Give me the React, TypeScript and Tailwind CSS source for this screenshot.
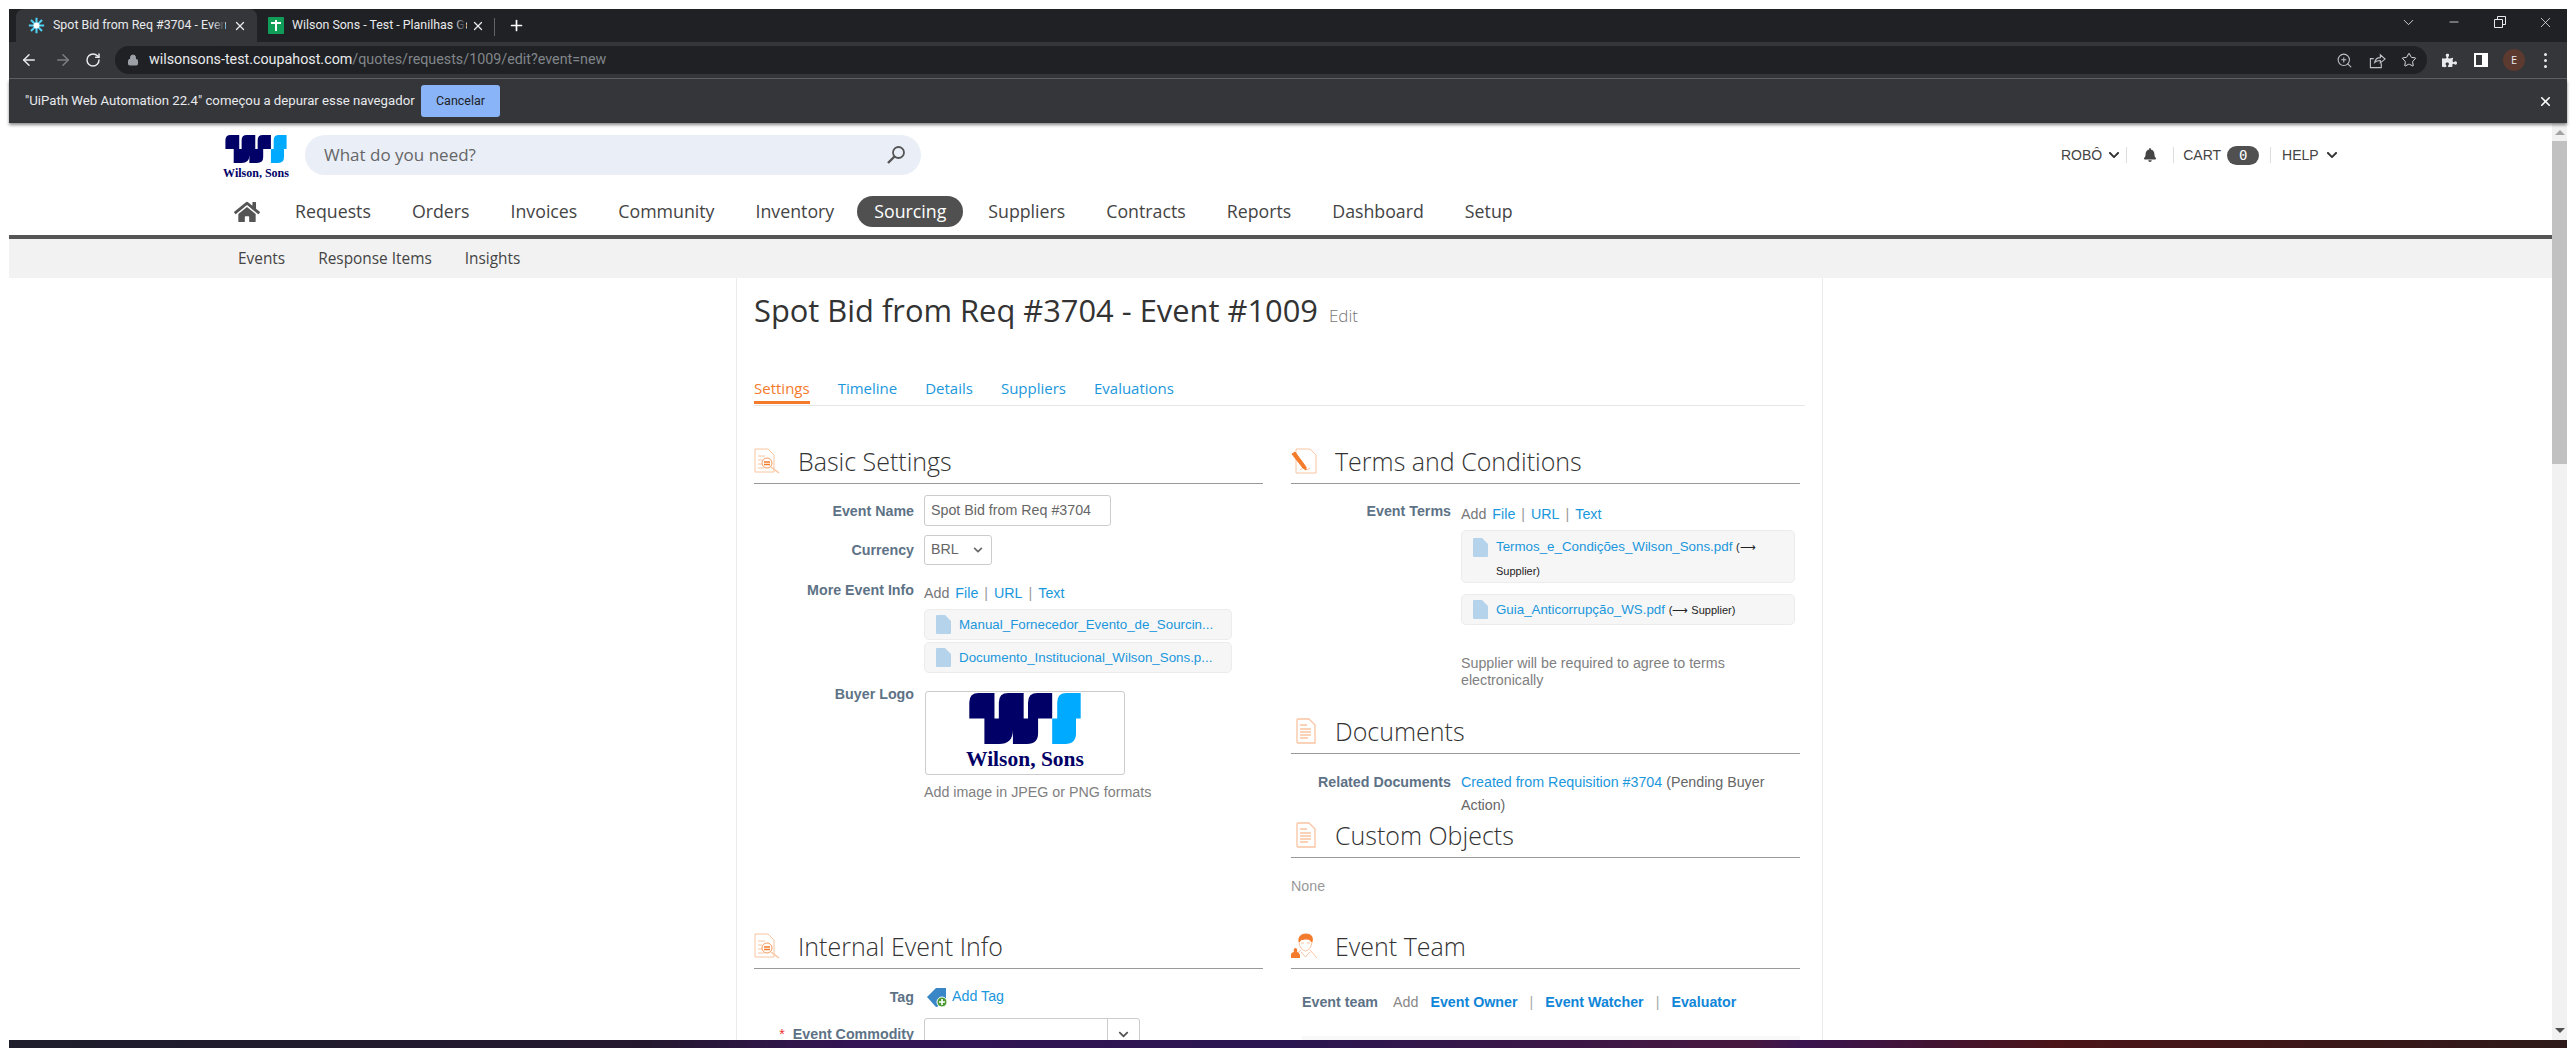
import React from "react";
import { ArrowLeft, ArrowRight, RotateCw, Lock, ZoomIn, Star, X, Plus, ChevronDown, Minus } from "lucide-react";
import { FaHome, FaBell, FaPuzzlePiece, FaChevronDown } from "react-icons/fa";

const Sep = () => <span className="text-[#9a9a9a] mx-[6px]">|</span>;

function Logo({ className }: { className: string }) {
  return (
    <svg viewBox="0 0 332 152" className={className}>
      <path fill="#000066" d="M0 28Q0 0 28 0H75V76H88V28Q88 0 116 0H162V76H175V28Q175 0 203 0H247V76H205V120Q205 152 172 152H130V110Q130 152 88 152H45V76H0Z" />
      <path fill="#00aaff" d="M247 76H262V28Q262 0 290 0H332V76H318V120Q318 152 286 152H247Z" />
    </svg>
  );
}

function FileIcon() {
  return (
    <svg viewBox="0 0 15 19" className="w-[15px] h-[19px] shrink-0">
      <path fill="#b5d3ea" d="M0 1Q0 0 1 0H9L15 6V18Q15 19 14 19H1Q0 19 0 18Z" />
    </svg>
  );
}

function IconDocSearch() {
  return (
    <svg viewBox="0 0 26 26" className="w-[26px] h-[26px]" fill="none" stroke="#f9c4a0" strokeWidth="1">
      <path d="M1 1H14L20 7V24H1Z" fill="#fff" />
      <path d="M4 8H11M4 12H8M4 16H8M4 20H10" />
      <circle cx="13" cy="15" r="5" fill="#fff" stroke="#f59a5f" />
      <path d="M10 14H16M10 16.5H16" stroke="#f47b2b" strokeWidth="1.6" />
      <path d="M17 19L25 25" stroke="#f9c4a0" strokeWidth="1.5" />
    </svg>
  );
}
function IconPen() {
  return (
    <svg viewBox="0 0 26 26" className="w-[26px] h-[26px]" fill="none" stroke="#f9c4a0" strokeWidth="1">
      <path d="M5 1H19L25 7V25H5Z" />
      <path d="M9 22L13 19L16 22L19 20" />
      <path d="M1 6L4 4L15 19L15 22L12 20Z" fill="#f47b2b" stroke="#f47b2b" />
    </svg>
  );
}
function IconDoc() {
  return (
    <svg viewBox="0 0 20 26" className="w-[20px] h-[26px] ml-[5px]" fill="none" stroke="#f9c4a0" strokeWidth="1.3">
      <path d="M1 2Q1 1 2 1H13L19 7V25H2Q1 25 1 24Z" fill="#fff" />
      <path d="M4 7H11M4 11H15M4 14H15M4 17H15M4 20H12" />
    </svg>
  );
}
function IconPerson() {
  return (
    <svg viewBox="0 0 26 26" className="w-[26px] h-[26px]" fill="none" stroke="#f9c4a0" strokeWidth="1">
      <path d="M8 9Q7 1 15 1Q23 1 21 9Q18 5 14 6Q10 6 8 9Z" fill="#f47b2b" stroke="#f47b2b" />
      <path d="M8 9Q9 17 14.500 18Q20 17 21 9" />
      <path d="M10 10H13M16 10H19" />
      <path d="M10 17L5 21M19 17L26 25M14.500 24L10 19M14.500 24L19 19" />
      <path d="M0 25V21Q1 19 3 19Q2 16 4 15Q7 15 6 19Q8 19 9 22V25Z" fill="#f47b2b" stroke="none" />
    </svg>
  );
}

function Section({ icon, title, children }: { icon: React.ReactNode; title: string; children?: React.ReactNode }) {
  return (
    <div>
      <div className="h-[35px] flex items-center border-b border-[#999] pb-[10px]">
        <span className="w-[44px] shrink-0 flex">{icon}</span>
        <h2 className="font-['Open_Sans',sans-serif] font-light text-[25px] leading-[24px] text-[#333]">{title}</h2>
      </div>
      {children}
    </div>
  );
}

function Label({ children, className = "" }: { children: React.ReactNode; className?: string }) {
  return <div className={`w-[160px] shrink-0 text-right font-bold text-[14.25px] leading-[16px] text-[#5d7286] ${className}`}>{children}</div>;
}

function AddLinks() {
  return (
    <div className="h-[16px] leading-[16px] text-[14.25px] text-[#777]">
      Add<span className="text-[#1b97dc] ml-[6px]">File</span><Sep /><span className="text-[#1b97dc]">URL</span><Sep /><span className="text-[#1b97dc]">Text</span>
    </div>
  );
}

function Chip({ name }: { name: string }) {
  return (
    <div className="h-[31px] flex items-center gap-[8px] pl-[11px] bg-[#f6f6f6] border border-[#ececec] rounded-[5px] text-[13.33px] text-[#1b97dc]">
      <FileIcon />
      <span>{name}</span>
    </div>
  );
}

const NAV = ["Requests", "Orders", "Invoices", "Community", "Inventory", "Sourcing", "Suppliers", "Contracts", "Reports", "Dashboard", "Setup"];

export default function App() {
  return (
    <div className="w-[2576px] h-[1048px] overflow-hidden bg-white flex flex-col pt-[9px] font-['Liberation_Sans',sans-serif]">
      <div className="flex-1 min-h-0 flex flex-col mx-[9px]">
        {/* Tab strip */}
        <div className="h-[33px] bg-[#202124] flex items-end pl-[7px] font-['Roboto',sans-serif] text-[12.4px] text-[#e8eaed] shrink-0">
          <div className="relative w-[241px] h-[33px] bg-[#35363a] rounded-t-[8px] flex items-center pl-[12px] overflow-hidden">
            <svg viewBox="0 0 20 20" className="w-[17px] h-[17px] shrink-0" stroke="#4fd2f5" strokeWidth="2.4">
              <path d="M10 1V19M1 10H19M3.500 3.500L16.500 16.500M16.500 3.500L3.500 16.500" />
              <circle cx="10" cy="10" r="3.500" fill="#fff" stroke="none" />
            </svg>
            <span className="ml-[8px] whitespace-nowrap w-[173px] overflow-hidden">Spot Bid from Req #3704 - Event #1009</span>
            <span className="absolute right-[32px] top-0 h-full w-[12px] bg-gradient-to-r from-transparent to-[#35363a]" />
            <X size={14} strokeWidth={2.2} className="absolute right-[10px] top-[10px]" />
          </div>
          <div className="relative w-[238px] h-[33px] flex items-center pl-[11px] overflow-hidden">
            <span className="w-[16px] h-[17px] bg-[#0f9d58] rounded-[1px] shrink-0 flex items-center justify-center relative">
              <span className="w-[2px] h-[11px] bg-white" />
              <span className="absolute top-[5px] left-[3px] w-[10px] h-[2px] bg-white" />
            </span>
            <span className="ml-[8px] whitespace-nowrap w-[175px] overflow-hidden">Wilson Sons - Test - Planilhas Google</span>
            <span className="absolute right-[29px] top-0 h-full w-[12px] bg-gradient-to-r from-transparent to-[#202124]" />
            <X size={14} strokeWidth={2.2} className="absolute right-[10px] top-[10px]" />
            <span className="absolute right-0 top-[9px] h-[18px] w-px bg-[#5f6368]" />
          </div>
          <Plus size={17} strokeWidth={2.4} className="ml-[13px] mb-[8px] text-white" />
          <div className="ml-auto self-start flex items-center text-[#e8eaed] h-[26px]">
            <ChevronDown size={17} strokeWidth={1.2} className="mr-[30px]" />
            <Minus size={14} strokeWidth={1.4} className="mr-[33px]" />
            <svg viewBox="0 0 12 12" className="w-[12px] h-[12px] mr-[31px]" fill="none" stroke="#e8eaed"><path d="M.5 3.500H8.500V11.500H.5ZM3.500 3.500V.5H11.500V8.500H8.500" /></svg>
            <X size={17} strokeWidth={1.1} className="mr-[13px]" />
          </div>
        </div>
        {/* Toolbar */}
        <div className="h-[36px] bg-[#35363a] border-b border-[#5f6368] flex items-center shrink-0 text-[#dadce0] box-content">
          <ArrowLeft size={18} strokeWidth={2} className="ml-[11px] text-[#e8eaed]" />
          <ArrowRight size={18} strokeWidth={2} className="ml-[16px] text-[#7d7f83]" />
          <RotateCw size={16} strokeWidth={2.2} className="ml-[13px] text-[#e8eaed]" />
          <div className="ml-[14px] w-[2312px] h-[28px] bg-[#202124] rounded-full flex items-center pl-[12px] pr-[10px] font-['Roboto',sans-serif] text-[14.3px]">
            <Lock size={12} className="text-[#9aa0a6]" fill="#9aa0a6" />
            <span className="ml-[10px] text-[#e8eaed]">wilsonsons-test.coupahost.com</span>
            <span className="text-[#80868b]">/quotes/requests/1009/edit?event=new</span>
            <div className="ml-auto flex items-center">
              <ZoomIn size={17} strokeWidth={1.5} className="text-[#bdc1c6] mr-[16px]" />
              <svg viewBox="0 0 18 18" className="w-[17px] h-[17px] mr-[15px]" fill="none" stroke="#bdc1c6" strokeWidth="1.2">
                <path d="M5 7H1.500V16.500H13V12M6 11Q7 6 12 6V3L17 7.500L12 11.500V9Q8 9 6 11Z" />
              </svg>
              <Star size={16} strokeWidth={1.5} className="text-[#dadce0]" />
            </div>
          </div>
          <FaPuzzlePiece size={15} className="ml-[15px] text-[#e8eaed]" />
          <span className="ml-[17px] w-[14px] h-[14px] border-[2px] border-white flex justify-end"><span className="w-[4px] h-full bg-white" /></span>
          <span className="ml-[15px] w-[22px] h-[22px] rounded-full bg-[#5d3a30] text-[#e8eaed] text-[11px] flex items-center justify-center font-['Open_Sans',sans-serif]">E</span>
          <span className="ml-[19px] flex flex-col gap-[3px]">
            <span className="w-[3px] h-[3px] rounded-full bg-[#e8eaed]" />
            <span className="w-[3px] h-[3px] rounded-full bg-[#e8eaed]" />
            <span className="w-[3px] h-[3px] rounded-full bg-[#e8eaed]" />
          </span>
        </div>
        {/* Info bar */}
        <div className="h-[44px] bg-[#35363a] flex items-center pl-[16px] pr-[14px] font-['Roboto',sans-serif] text-[13.2px] text-[#e8eaed] shrink-0 shadow-[0_2px_3px_rgba(0,0,0,0.45)] relative z-10">
          <span>"UiPath Web Automation 22.4" começou a depurar esse navegador</span>
          <span className="absolute left-[412px] top-[6px] w-[79px] h-[32px] bg-[#8ab4f8] rounded-[3px] text-[#202124] text-[12.5px] flex items-center justify-center">Cancelar</span>
          <X size={15} strokeWidth={2.6} className="ml-auto text-white" />
        </div>

        {/* Page */}
        <div className="flex-1 min-h-0 flex">
          <div className="flex-1 min-w-0 flex flex-col overflow-hidden">
            <div className="h-[116px] shrink-0 border-b-[4px] border-[#555] pl-[215px] flex flex-col">
              <div className="h-[72px] flex shrink-0 pt-[12px]">
                <div className="w-[64px] flex flex-col items-center">
                  <Logo className="w-[64px] h-[28px]" />
                  <span className="mt-[3px] font-['Liberation_Serif',serif] font-bold text-[12px] leading-[14px] text-[#000066] whitespace-nowrap">Wilson, Sons</span>
                </div>
                <div className="ml-[17px] w-[616px] h-[40px] bg-[#e9eef7] rounded-full flex items-center pl-[19px] pr-[15px] font-['Open_Sans',sans-serif] text-[17px] text-[#666]">
                  <span>What do you need?</span>
                  <svg viewBox="0 0 20 20" className="ml-auto w-[20px] h-[20px]" fill="none" stroke="#555">
                    <circle cx="12.500" cy="7.500" r="5.500" strokeWidth="1.8" />
                    <path d="M8.500 11.500L2 18" strokeWidth="2.4" />
                  </svg>
                </div>
                <div className="ml-[1140px] h-[24px] mt-[8px] flex items-center font-['Liberation_Sans',sans-serif] text-[14px] text-[#444]">
                  <span>ROBÔ</span>
                  <FaChevronDown size={12} className="ml-[6px] text-[#333]" />
                  <span className="ml-[6px] w-px h-[16px] bg-[#ddd]" />
                  <FaBell size={14} className="ml-[16px] text-[#444]" />
                  <span className="ml-[16px] w-px h-[16px] bg-[#ddd]" />
                  <span className="ml-[9px]">CART</span>
                  <span className="ml-[6px] w-[32px] h-[19px] rounded-full bg-[#505050] text-white font-['DejaVu_Sans_Mono',monospace] text-[14px] flex items-center justify-center">0</span>
                  <span className="ml-[11px] w-px h-[16px] bg-[#ddd]" />
                  <span className="ml-[11px]">HELP</span>
                  <FaChevronDown size={12} className="ml-[7px] text-[#333]" />
                </div>
              </div>
              <div className="h-[31px] flex items-center font-['Open_Sans',sans-serif] text-[17.75px] text-[#444] mt-[1px]">
                <FaHome size={26} className="ml-[10px] mr-[35px] text-[#555]" />
                {NAV.map((n) =>
                  n === "Sourcing" ? (
                    <span key={n} className="h-[31px] px-[17px] mr-[25px] bg-[#505050] text-white rounded-full flex items-center">{n}</span>
                  ) : (
                    <span key={n} className={n === "Inventory" ? "mr-[23px]" : "mr-[41px]"}>{n}</span>
                  )
                )}
              </div>
            </div>
            <div className="h-[39px] shrink-0 bg-[#f2f2f2] pl-[229px] flex items-center gap-[33px] font-['Open_Sans',sans-serif] text-[15.4px] text-[#444]">
              <span>Events</span><span>Response Items</span><span>Insights</span>
            </div>

            {/* Card */}
            <div className="flex-1 min-h-0 ml-[727px] w-[1087px] border-x border-[#ebebeb] pt-[12px] pl-[17px] overflow-hidden">
              <div className="h-[40px] flex items-baseline font-['Open_Sans',sans-serif] text-[#333]">
                <h1 className="text-[30.85px] leading-[40px]">Spot Bid from Req #3704 - Event #1009</h1>
                <span className="ml-[11px] text-[17px] text-[#777] font-light">Edit</span>
              </div>
              <div className="mt-[48px] w-[1051px] h-[28px] border-b border-[#e6e6e6] flex gap-[28px] font-['Open_Sans',sans-serif] text-[15px] leading-[20px] text-[#1b97dc]">
                <span className="h-[26px] border-b-[3px] border-[#f47b2b] text-[#f47b2b]">Settings</span>
                <span>Timeline</span><span>Details</span><span>Suppliers</span><span>Evaluations</span>
              </div>
              <div className="mt-[43px] grid grid-cols-[509px_509px] grid-rows-[485px_auto] gap-x-[28px]">
                {/* Left top */}
                <Section icon={<IconDocSearch />} title="Basic Settings">
                  <div className="mt-[11px] flex items-center gap-[10px]">
                    <Label>Event Name</Label>
                    <div className="w-[187px] h-[31px] border border-[#ccc] rounded-[3px] pl-[6px] flex items-center text-[14.25px] text-[#666]">Spot Bid from Req #3704</div>
                  </div>
                  <div className="mt-[9px] flex items-center gap-[10px]">
                    <Label>Currency</Label>
                    <div className="w-[68px] h-[30px] border border-[#ccc] rounded-[3px] pl-[6px] pr-[8px] flex items-center justify-between text-[14.25px] text-[#666]">BRL<FaChevronDown size={10} className="text-[#666]" /></div>
                  </div>
                  <div className="mt-[20px] flex gap-[10px]">
                    <Label className="-mt-[3px]">More Event Info</Label>
                    <div className="w-[308px]">
                      <AddLinks />
                      <div className="mt-[8px] flex flex-col gap-[2px]">
                        <Chip name="Manual_Fornecedor_Evento_de_Sourcin..." />
                        <Chip name="Documento_Institucional_Wilson_Sons.p..." />
                      </div>
                    </div>
                  </div>
                  <div className="mt-[18px] flex gap-[10px]">
                    <Label className="-mt-[5px]">Buyer Logo</Label>
                    <div>
                      <div className="ml-[1px] w-[200px] h-[84px] border border-[#ccc] rounded-[3px] flex flex-col items-center pt-[1px]">
                        <Logo className="w-[118px] h-[51px]" />
                        <span className="mt-[3px] font-['Liberation_Serif',serif] font-bold text-[21.500px] leading-[24px] text-[#000066] whitespace-nowrap">Wilson, Sons</span>
                      </div>
                      <div className="mt-[9px] text-[14.25px] leading-[16px] text-[#808080]">Add image in JPEG or PNG formats</div>
                    </div>
                  </div>
                </Section>
                {/* Right top */}
                <div>
                  <Section icon={<IconPen />} title="Terms and Conditions">
                    <div className="mt-[22px] flex gap-[10px]">
                      <Label className="-mt-[3px]">Event Terms</Label>
                      <div className="w-[334px]">
                        <AddLinks />
                        <div className="mt-[8px] h-[53px] bg-[#f6f6f6] border border-[#ececec] rounded-[5px] flex gap-[8px] pl-[11px] pt-[7px] text-[13.33px] leading-[23px] text-[#1b97dc]">
                          <FileIcon />
                          <div className="-mt-[3px]">Termos_e_Condições_Wilson_Sons.pdf <span className="text-[11px] text-[#222]">(⟶<br />Supplier)</span></div>
                        </div>
                        <div className="mt-[11px] h-[31px] bg-[#f6f6f6] border border-[#ececec] rounded-[5px] flex items-center gap-[8px] pl-[11px] text-[13.33px] text-[#1b97dc]">
                          <FileIcon />
                          <div>Guia_Anticorrupção_WS.pdf <span className="text-[11px] text-[#222]">(⟶ Supplier)</span></div>
                        </div>
                        <div className="mt-[30px] text-[14.25px] leading-[17px] text-[#808080]">Supplier will be required to agree to terms<br />electronically</div>
                      </div>
                    </div>
                  </Section>
                  <div className="mt-[30px]">
                    <Section icon={<IconDoc />} title="Documents">
                      <div className="mt-[17px] flex gap-[10px] text-[14.25px] leading-[23px]">
                        <Label className="mt-[3px]">Related Documents</Label>
                        <div className="w-[334px] text-[#666]"><span className="text-[#1b97dc]">Created from Requisition #3704</span> (Pending Buyer Action)</div>
                      </div>
                    </Section>
                  </div>
                  <div className="mt-[6px]">
                    <Section icon={<IconDoc />} title="Custom Objects">
                      <div className="mt-[20px] text-[14.25px] leading-[16px] text-[#999]">None</div>
                    </Section>
                  </div>
                </div>
                {/* Left bottom */}
                <Section icon={<IconDocSearch />} title="Internal Event Info">
                  <div className="mt-[20px] h-[16px] flex items-center gap-[10px]">
                    <Label>Tag</Label>
                    <svg viewBox="0 0 20 20" className="ml-[3px] w-[20px] h-[20px] shrink-0">
                      <path fill="#3a87c8" d="M0 10L9 1H19V12L10 20H9Z" />
                      <circle cx="15" cy="15" r="5" fill="#4a9a2f" stroke="#fff" />
                      <path d="M12 15H18M15 12V18" stroke="#fff" strokeWidth="1.6" />
                    </svg>
                    <span className="-ml-[5px] text-[14.25px] text-[#1b97dc]">Add Tag</span>
                  </div>
                  <div className="mt-[13px] flex items-center gap-[10px]">
                    <Label><span className="text-[#e33] font-normal mr-[8px]">*</span>Event Commodity</Label>
                    <div className="w-[216px] h-[32px] border border-[#ccc] rounded-[3px] flex justify-end">
                      <span className="w-[32px] border-l border-[#ccc] flex items-center justify-center"><FaChevronDown size={11} className="text-[#555]" /></span>
                    </div>
                  </div>
                </Section>
                {/* Right bottom */}
                <Section icon={<IconPerson />} title="Event Team">
                  <div className="mt-[25px] pl-[11px] h-[16px] flex items-center text-[14.25px] leading-[16px] font-bold text-[#0f86d8]">
                    <span className="text-[#5d7286]">Event team</span>
                    <span className="ml-[15px] font-normal text-[#888]">Add</span>
                    <span className="ml-[12px]">Event Owner</span>
                    <span className="mx-[12px] font-normal text-[#aaa]">|</span>
                    <span>Event Watcher</span>
                    <span className="mx-[12px] font-normal text-[#aaa]">|</span>
                    <span>Evaluator</span>
                  </div>
                  <div className="mt-[26px] ml-[11px] h-[40px] bg-[#f8f8f8]" />
                </Section>
              </div>
            </div>
          </div>
          {/* Scrollbar */}
          <div className="w-[15px] shrink-0 bg-[#f1f1f1] flex flex-col items-center">
            <span className="mt-[7px] w-0 h-0 border-x-[5px] border-x-transparent border-b-[5px] border-b-[#a3a3a3]" />
            <span className="mt-[6px] w-full h-[323px] bg-[#c1c1c1]" />
            <span className="mt-auto mb-[7px] w-0 h-0 border-x-[5px] border-x-transparent border-t-[5px] border-t-[#505050]" />
          </div>
        </div>
      </div>
      <div className="h-[8px] shrink-0 mx-[9px] bg-[linear-gradient(90deg,#1e1e2c_0%,#24182f_25%,#341455_33%,#2a1650_50%,#47183f_68%,#3a1450_70%,#4a1418_80%,#2e1a1a_100%)]" />
    </div>
  );
}
